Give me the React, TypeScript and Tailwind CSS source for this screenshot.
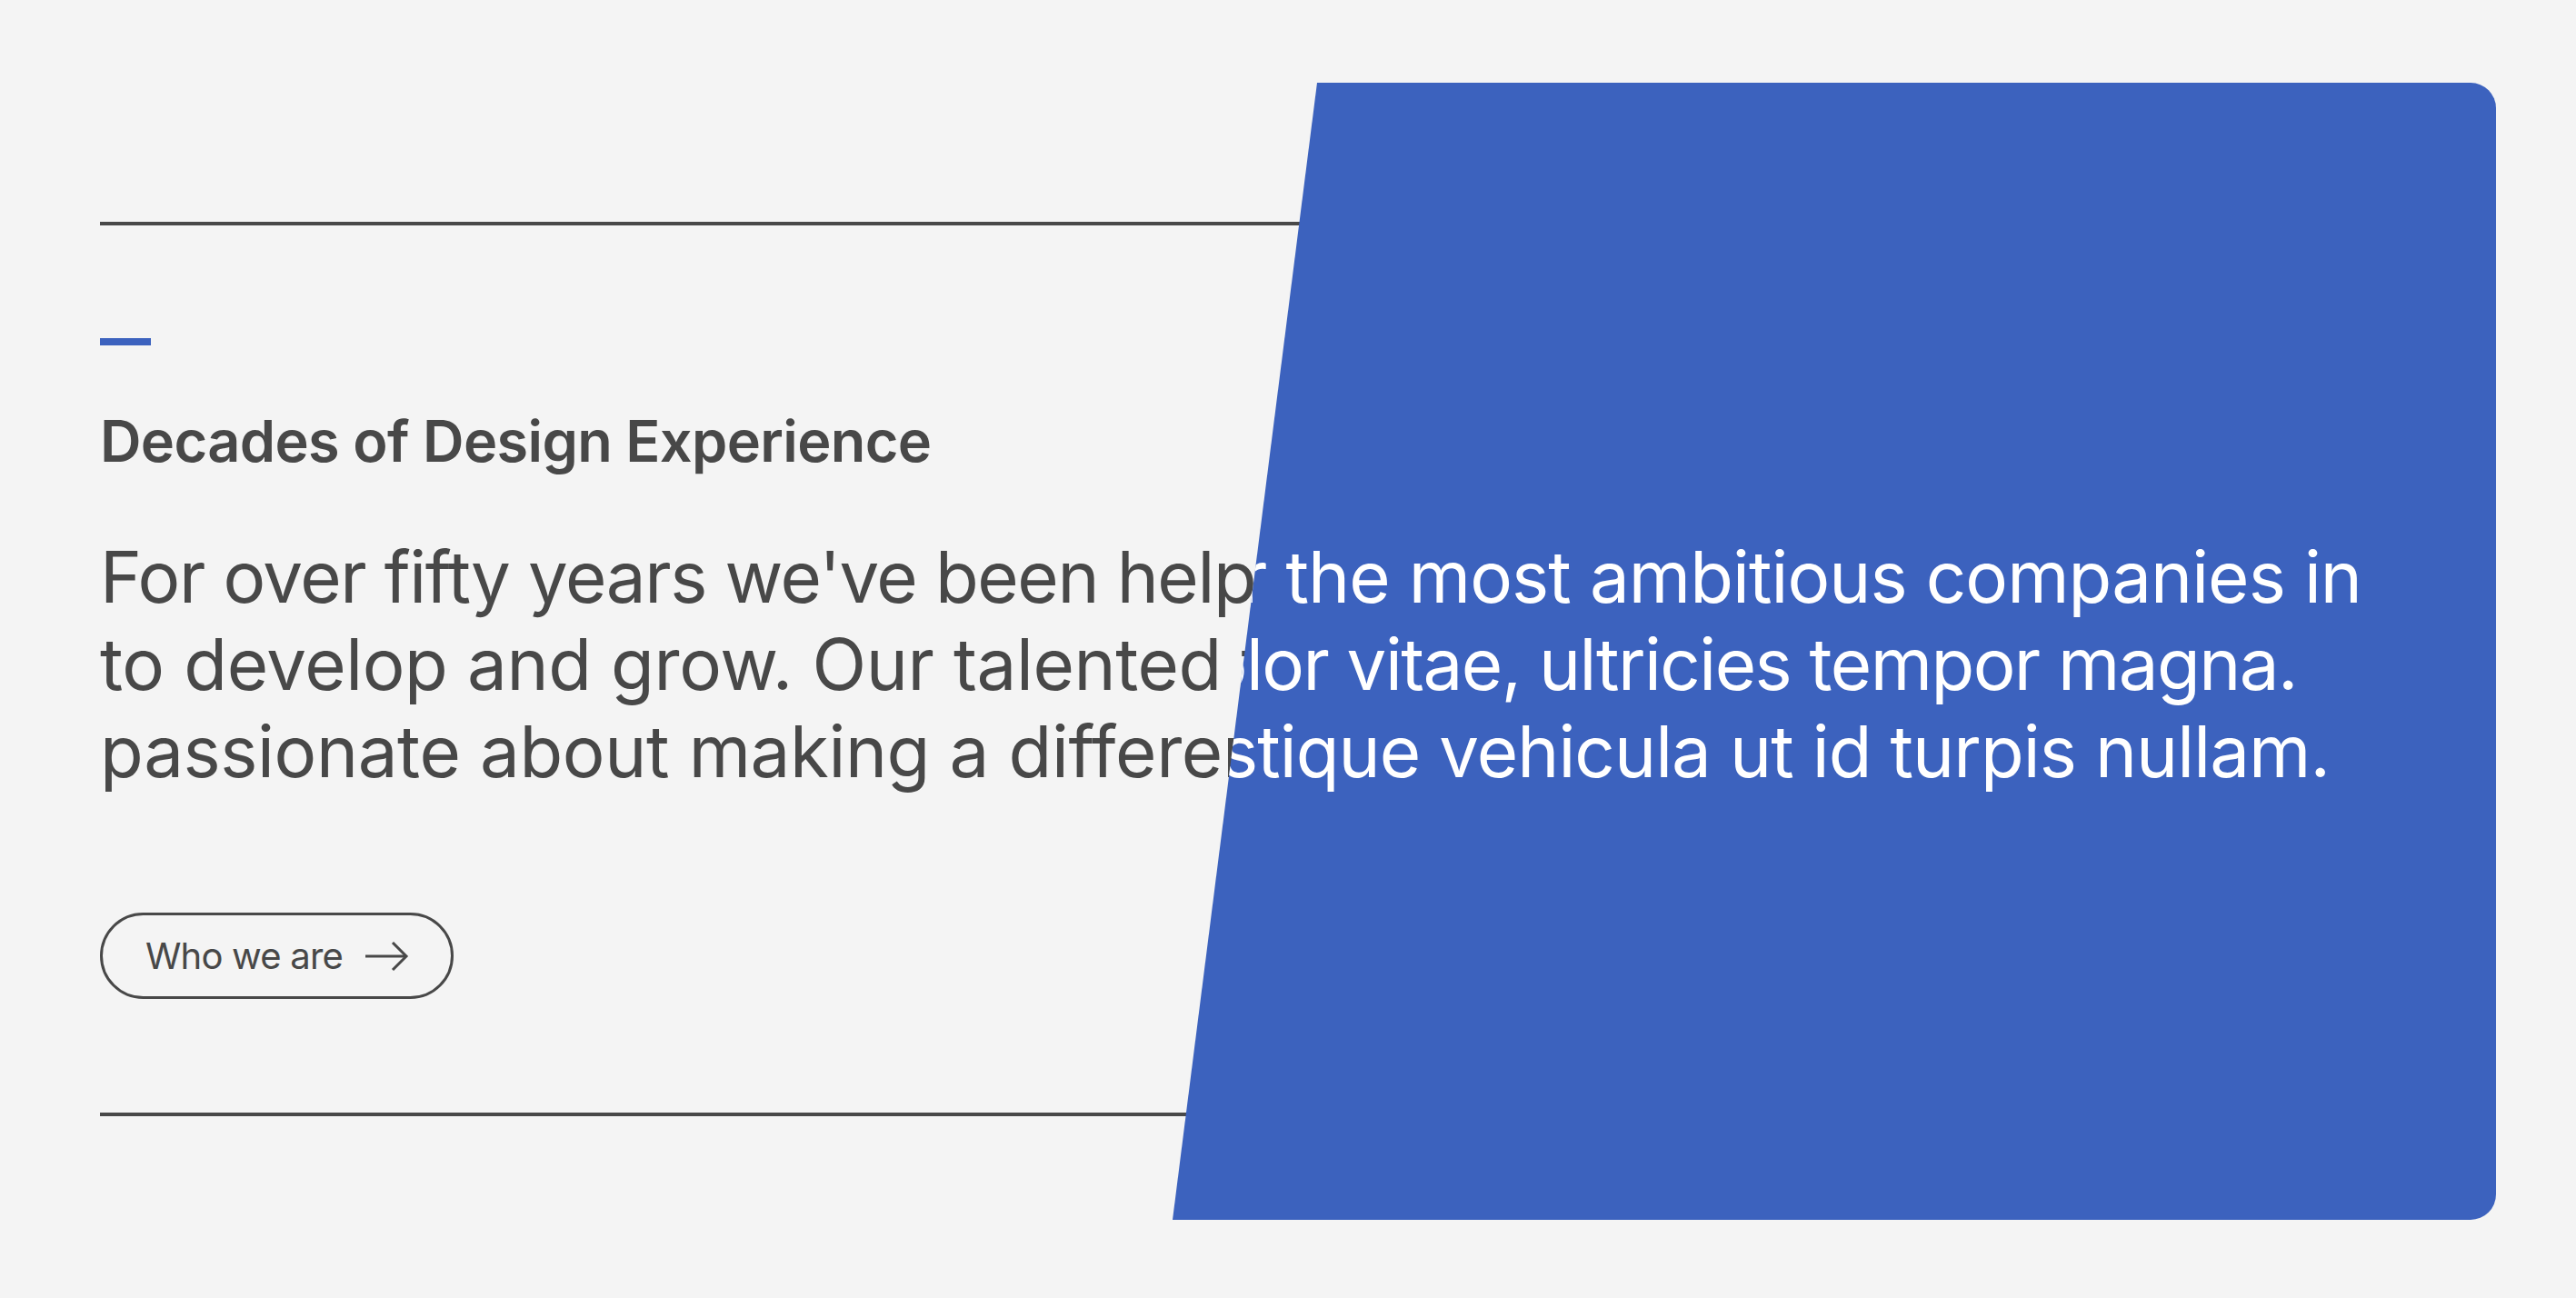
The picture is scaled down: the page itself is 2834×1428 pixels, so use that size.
import React from "react";

export default function App() {
  return (
    <div className="min-h-screen w-full bg-[#f4f4f4] font-['Inter',sans-serif] text-[#484848]">
      <div className="relative h-[1428px] w-[2834px] overflow-hidden">
        <div className="flex flex-col items-start pl-[110px] pt-[244px]">
          <div className="h-[4px] w-[1400px] bg-[#484848]" />
          <div className="mt-[124px] h-[8px] w-[56px] bg-[#3c62be]" />
          <h2 className="mt-[67px] whitespace-nowrap text-[63px] font-semibold leading-[76px] tracking-[-0.01em]">
            Decades of Design Experience
          </h2>
          <p className="mt-[64px] whitespace-nowrap text-[78px] leading-[96px] tracking-[-0.005em]">
            <span className="tracking-[-0.018em]">For over fifty years we&apos;ve been helping ambitious brands</span>
            <br />
            to develop and grow. Our talented team is
            <br />
            passionate about making a difference.
          </p>
          <button className="mt-[129px] flex h-[95px] items-center gap-[25px] rounded-full border-[3px] border-[#484848] pl-[47px] pr-[46px] text-[40px] leading-none tracking-[-0.02em] text-[#484848]">
            <span>Who we are</span>
            <svg width="48" height="32" viewBox="0 0 48 32" fill="none" stroke="currentColor" strokeWidth="3">
              <path d="M0 16H45" />
              <path d="M30 1L45 16L30 31" />
            </svg>
          </button>
          <div className="mt-[125px] h-[4px] w-[1400px] bg-[#484848]" />
        </div>

        <div className="absolute left-[1290px] top-[91px] h-[1251px] w-[1456px] overflow-hidden rounded-r-[28px] bg-[#3c62be] [clip-path:polygon(159px_0,100%_0,100%_100%,0_100%)]">
          <div className="mt-[496px] flex flex-col text-[78px] leading-[96px] tracking-[-0.012em] text-white">
            <div className="flex w-[1308px] justify-end whitespace-nowrap">
              Lorem ipsum dolor sit amet, built for the most ambitious companies in
            </div>
            <div className="flex w-[1237px] justify-end whitespace-nowrap tracking-[-0.02em]">
              Aenean sed orci eu dolor vitae, ultricies tempor magna.
            </div>
            <div className="flex w-[1273px] justify-end whitespace-nowrap">
              Morbi porta nisl tristique vehicula ut id turpis nullam.
            </div>
          </div>
        </div>
      </div>
    </div>
  );
}
